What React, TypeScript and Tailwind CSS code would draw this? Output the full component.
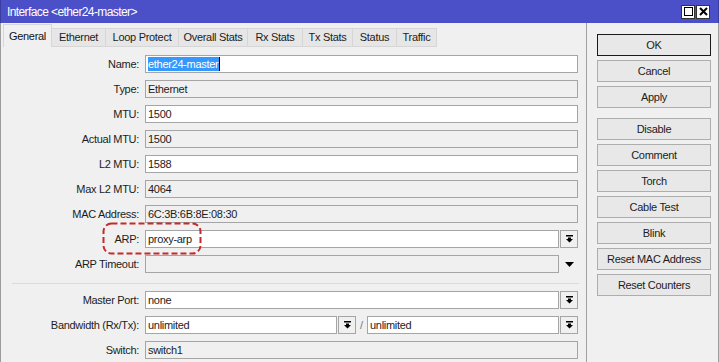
import React from 'react';

const tabs = [
  { name: 'General', w: 'w-[49px]', active: true },
  { name: 'Ethernet', w: 'w-[54px]' },
  { name: 'Loop Protect', w: 'w-[73px]' },
  { name: 'Overall Stats', w: 'w-[69px]' },
  { name: 'Rx Stats', w: 'w-[55px]' },
  { name: 'Tx Stats', w: 'w-[50px]' },
  { name: 'Status', w: 'w-[44px]' },
  { name: 'Traffic', w: 'w-[40px]' },
];

const buttons = ['Disable', 'Comment', 'Torch', 'Cable Test', 'Blink', 'Reset MAC Address', 'Reset Counters'];

const DropIcon = () => (
  <svg width="7" height="8" viewBox="0 0 7 8">
    <rect x="0" y="0" width="7" height="1.5" fill="#000" />
    <path d="M2 2.5h3v1.5h2L3.5 7.5 0 4h2z" fill="#000" />
  </svg>
);

const DropBtn = () => (
  <div className="w-[18px] h-[18px] ml-[1px] border border-[#a5a5a5] bg-[#f0f0f0] flex items-center justify-center">
    <DropIcon />
  </div>
);

const Input = ({ value, editable, w, children }: { value?: string; editable?: boolean; w: string; children?: React.ReactNode }) => (
  <div
    className={`${w} h-[18px] border border-[#a5a5a5] pl-[2px] flex items-center whitespace-nowrap overflow-hidden ${
      editable ? 'bg-white' : 'bg-[#f0f0f0]'
    }`}
  >
    {children ?? value}
  </div>
);

const Row = ({ label, children, mb = 'mb-[7px]' }: { label: string; children: React.ReactNode; mb?: string }) => (
  <div className={`flex items-center h-[18px] ${mb}`}>
    <div className="w-[138px] text-right whitespace-nowrap">{label}</div>
    <div className="ml-[6px] flex items-center">{children}</div>
  </div>
);

const Btn = ({ label, primary }: { label: string; primary?: boolean }) => (
  <div
    className={`w-[114px] h-[22px] flex items-center justify-center bg-[#e8e8e8] border ${
      primary ? 'border-[#1a1a1a]' : 'border-[#adadad]'
    }`}
  >
    {label}
  </div>
);

export default function App() {
  return (
    <div className="w-[719px] h-[362px] overflow-hidden bg-[#f0f0f0] font-['Liberation_Sans',Arial,sans-serif] text-[11px] tracking-[-0.3px] text-[#1c1c1c] select-none">
      {/* title bar */}
      <div className="h-[23px] bg-[#4b4fc8] flex items-center pl-[6px] pr-[8px] border-l border-r border-[#3a3d9c]">
        <span className="text-white text-[12px] tracking-[-0.6px]">Interface &lt;ether24-master&gt;</span>
        <div className="ml-auto flex gap-[1px]">
          <div className="w-[14px] h-[14px] bg-white border border-[#333] flex items-center justify-center">
            <div className="w-[9px] h-[9px] border border-black" />
          </div>
          <div className="w-[14px] h-[14px] bg-white border border-[#333] flex items-center justify-center">
            <svg width="9" height="9" viewBox="0 0 9 9">
              <path d="M1 1l7 7M8 1L1 8" stroke="#000" strokeWidth="2" />
            </svg>
          </div>
        </div>
      </div>

      <div className="flex h-[339px] border-l border-r border-[#9c9c9c]">
        {/* left panel */}
        <div className="relative w-[586px] border-r border-[#a0a0a0]">
          <div className="flex items-end h-[24px] pl-[2px] pt-[1px]">
            {tabs.map((t) =>
              t.active ? (
                <div
                  key={t.name}
                  className={`${t.w} h-[23px] border-t border-l border-r border-[#d6d6d6] bg-[#f0f0f0] flex items-center justify-center text-[#111]`}
                >
                  {t.name}
                </div>
              ) : (
                <div
                  key={t.name}
                  className={`${t.w} h-[19px] border-t border-r border-b border-[#d6d6d6] bg-[#e6e6e6] flex items-center justify-center`}
                >
                  {t.name}
                </div>
              )
            )}
          </div>

          <div className="pt-[8px]">
            <Row label="Name:">
              <Input w="w-[433px]" editable>
                <span className="bg-[#3399ff] text-white h-[14px] flex items-center pr-[1px]">ether24-master</span>
                <span className="w-[1px] h-[14px] bg-black" />
              </Input>
            </Row>
            <Row label="Type:">
              <Input w="w-[433px]" value="Ethernet" />
            </Row>
            <Row label="MTU:">
              <Input w="w-[433px]" editable value="1500" />
            </Row>
            <Row label="Actual MTU:">
              <Input w="w-[433px]" value="1500" />
            </Row>
            <Row label="L2 MTU:">
              <Input w="w-[433px]" editable value="1588" />
            </Row>
            <Row label="Max L2 MTU:">
              <Input w="w-[433px]" value="4064" />
            </Row>
            <Row label="MAC Address:">
              <Input w="w-[433px]" value="6C:3B:6B:8E:08:30" />
            </Row>
            <Row label="ARP:">
              <Input w="w-[414px]" editable value="proxy-arp" />
              <DropBtn />
            </Row>
            <Row label="ARP Timeout:" mb="mb-0">
              <Input w="w-[414px]" />
              <div className="w-[18px] ml-[1px] flex items-center justify-center">
                <svg width="9" height="5" viewBox="0 0 9 5">
                  <path d="M0 0h9L4.5 5z" fill="#000" />
                </svg>
              </div>
            </Row>

            <div className="ml-[11px] w-[567px] h-[1px] bg-[#dadada] mt-[10px] mb-[7px]" />

            <Row label="Master Port:">
              <Input w="w-[414px]" editable value="none" />
              <DropBtn />
            </Row>
            <Row label="Bandwidth (Rx/Tx):">
              <Input w="w-[192px]" editable value="unlimited" />
              <DropBtn />
              <span className="w-[11px] text-center text-[#777]">/</span>
              <Input w="w-[192px]" editable value="unlimited" />
              <DropBtn />
            </Row>
            <Row label="Switch:">
              <Input w="w-[433px]" value="switch1" />
            </Row>
          </div>

          {/* annotation */}
          <svg className="absolute left-[101px] top-[199px]" width="100" height="33" viewBox="0 0 100 33">
            <rect x="1.5" y="1.5" width="97" height="30" rx="8" fill="none" stroke="#c42a2a" strokeWidth="2" strokeDasharray="6 3" />
          </svg>
        </div>

        {/* right buttons */}
        <div className="pl-[10px] pt-[11px] flex flex-col">
          <div className="flex flex-col gap-[4px]">
            <Btn label="OK" primary />
            <Btn label="Cancel" />
            <Btn label="Apply" />
          </div>
          <div className="flex flex-col gap-[4px] mt-[10px]">
            {buttons.map((b) => (
              <Btn key={b} label={b} />
            ))}
          </div>
        </div>
      </div>
    </div>
  );
}
